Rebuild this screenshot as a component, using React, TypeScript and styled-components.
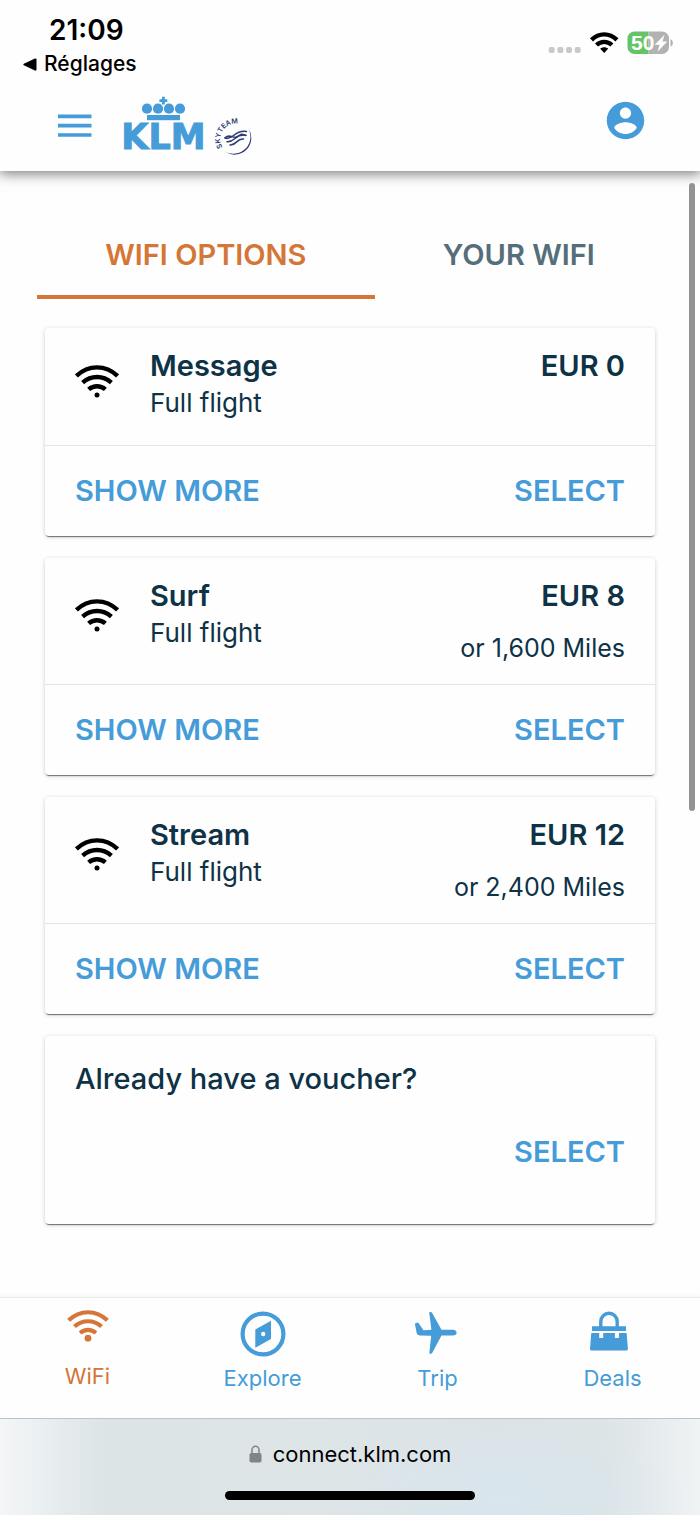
import React from "react";
import styled, { createGlobalStyle } from "styled-components";

const color = {
  blue: "#459cd8",
  orange: "#d47637",
  navy: "#0e3246",
  slate: "#546e7a",
  page: "#fefefe",
};

const GlobalStyle = createGlobalStyle`
  *, *::before, *::after { box-sizing: border-box; }
  body {
    margin: 0;
    background: ${color.page};
    color: ${color.navy};
    font-family: Inter, "Liberation Sans", sans-serif;
  }
  button {
    border: 0;
    padding: 0;
    background: none;
    color: inherit;
    font: inherit;
    cursor: pointer;
  }
  a { color: inherit; text-decoration: none; }
  svg { display: block; }
  h2, p { margin: 0; }
`;

const Page = styled.div`
  position: relative;
  display: flex;
  flex-direction: column;
  min-height: 100vh;
`;

const TopBar = styled.div`
  background: ${color.page};
  box-shadow: 0 2px 12px 1px rgba(0, 0, 0, 0.5);
`;

const StatusBar = styled.div`
  display: flex;
  justify-content: space-between;
  height: 86px;
  padding: 13px 27px 0 23px;
  color: #000;
`;

const StatusLeft = styled.div`
  display: flex;
  flex-direction: column;
`;

const Clock = styled.time`
  padding-left: 26px;
  font-size: 28px;
  font-weight: 600;
  line-height: 34px;
`;

const BackLink = styled.a`
  display: flex;
  align-items: center;
  gap: 7px;
  font-size: 21px;
  font-weight: 500;
  line-height: 34px;
`;

const StatusRight = styled.div`
  display: flex;
  align-items: flex-end;
  height: 42px;
`;

const Header = styled.header`
  display: flex;
  align-items: center;
  height: 85px;
  padding: 0 52px 5px 57px;
  color: ${color.blue};
`;

const MenuButton = styled.button`
  margin-right: 24px;
`;

const AccountButton = styled.button`
  margin: 0 0 12px auto;
`;

const Main = styled.main`
  flex: 1;
  padding: 40px 37px 72px;
`;

const Tabs = styled.div`
  display: flex;
`;

const Tab = styled.button<{ $active?: boolean }>`
  flex: 1 1 auto;
  padding: 24px 0 20px;
  border-bottom: 4px solid ${(p) => (p.$active ? color.orange : "transparent")};
  color: ${(p) => (p.$active ? color.orange : color.slate)};
  font-size: 29px;
  font-weight: 600;
  line-height: 40px;
`;

const CardList = styled.div`
  display: flex;
  flex-direction: column;
  gap: 22px;
  padding: 29px 8px 0;
`;

const Card = styled.section`
  border-radius: 4px;
  background: ${color.page};
  box-shadow: 0 2px 1px -1px rgba(0, 0, 0, 0.5), 0 1px 4px rgba(0, 0, 0, 0.2);
`;

const CardHead = styled.div`
  display: flex;
  min-height: 118px;
  padding: 20px 30px 20px;
  border-bottom: 1px solid #e4e5e6;
`;

const PlanIcon = styled.div`
  display: flex;
  align-items: center;
  width: 75px;
  padding-bottom: 10px;
  color: #000;
`;

const PlanText = styled.div`
  flex: 1;
`;

const PriceText = styled.div`
  text-align: right;
`;

const Title = styled.h2`
  font-size: 29px;
  font-weight: 600;
  line-height: 36px;
`;

const Detail = styled.p`
  font-size: 26px;
  line-height: 38px;
`;

const Miles = styled.p`
  margin-top: 18px;
  font-size: 25px;
  line-height: 32px;
`;

const CardActions = styled.div`
  display: flex;
  justify-content: space-between;
  height: 90px;
  padding: 0 30px;
`;

const TextButton = styled.button`
  color: ${color.blue};
  font-size: 29px;
  font-weight: 600;
  line-height: 36px;
`;

const VoucherCard = styled(Card)`
  display: flex;
  flex-direction: column;
  align-items: flex-start;
  gap: 37px;
  min-height: 188px;
  padding: 25px 30px;
`;

const VoucherTitle = styled.h2`
  font-size: 29px;
  font-weight: 500;
  line-height: 36px;
`;

const VoucherButton = styled(TextButton)`
  align-self: flex-end;
`;

const BottomNav = styled.nav`
  display: grid;
  grid-template-columns: repeat(4, 1fr);
  height: 121px;
  border-top: 1px solid #ececec;
  background: ${color.page};
  box-shadow: 0 -1px 4px rgba(0, 0, 0, 0.05);
`;

const NavItem = styled.a<{ $active?: boolean }>`
  display: flex;
  flex-direction: column;
  align-items: center;
  gap: ${(p) => (p.$active ? 18 : 5)}px;
  padding-top: ${(p) => (p.$active ? 12 : 13)}px;
  color: ${(p) => (p.$active ? color.orange : color.blue)};
  font-size: 22px;
  line-height: 32px;
`;

const BrowserBar = styled.footer`
  display: flex;
  flex-direction: column;
  align-items: center;
  gap: 19px;
  height: 97px;
  padding-top: 17px;
  border-top: 1px solid #bcc4ca;
  background:
    radial-gradient(ellipse 180px 80px at 72% 85%, rgba(216, 230, 238, 0.9), transparent),
    linear-gradient(90deg, #f4f6f7, #eaeff1 6%, #dce4e6 15%, #dee5e7 45%, #dbe3e7 70%, #dce4e6 86%, #e8edef 95%, #f0f3f4);
`;

const Address = styled.div`
  display: flex;
  align-items: center;
  gap: 11px;
  color: #000;
  font-size: 22px;
  line-height: 36px;
`;

const HomeIndicator = styled.div`
  width: 250px;
  height: 9px;
  border-radius: 5px;
  background: #000;
`;

const ScrollThumb = styled.div`
  position: absolute;
  top: 183px;
  right: 5px;
  width: 6px;
  height: 628px;
  border-radius: 3px;
  background: #929292;
`;

const WifiArcs = ({ width, height, dot }: { width: number; height: number; dot: number }) => (
  <svg width={width} height={height} viewBox="0 0 44 34" aria-hidden="true">
    <g fill="none" stroke="currentColor" strokeWidth="4.400">
      <path d="M1.400 11C13.300-.5 30.700-.5 42.600 11" />
      <path d="M7.600 17.600c8.400-7.500 20.400-7.500 28.800 0" />
      <path d="M13.600 24.400c5-4.300 11.800-4.300 16.800 0" />
    </g>
    <circle cx="22" cy="30" r={dot} fill="currentColor" />
  </svg>
);

const StatusIcons = () => (
  <svg width="125" height="24" viewBox="548 31 125 24" aria-label="Wi-Fi connected, battery 50 percent" role="img">
    <g fill="#c9c9c9">
      <rect x="548.700" y="47" width="6" height="6" rx="2" />
      <rect x="557.400" y="47" width="6" height="6" rx="2" />
      <rect x="566" y="47" width="6" height="6" rx="2" />
      <rect x="574.700" y="47" width="6" height="6" rx="2" />
    </g>
    <g fill="none" stroke="#000" strokeWidth="4.400">
      <path d="M591.500 39.800c7.400-7.200 18-7.200 25.400 0" />
      <path d="M596.500 45c4.600-4.200 10.800-4.200 15.400 0" />
    </g>
    <path d="M600.200 48.700c2.300-2 5.700-2 8 0l-4 4.300z" fill="#000" />
    <path d="M634.500 31.500H648.500V54H634.500a7 7 0 0 1-7-7v-8.500a7 7 0 0 1 7-7z" fill="#65c466" />
    <path d="M648.500 31.500H662a7 7 0 0 1 7 7V47a7 7 0 0 1-7 7H648.500z" fill="#b2b2b2" />
    <path d="M670.500 39.300c3.200 1.200 3.200 6 0 7.200z" fill="#b2b2b2" />
    <text x="631" y="50" fill="#fff" fontFamily="Liberation Sans, sans-serif" fontSize="21" fontWeight="700">
      50
    </text>
    <path d="M664.500 34.800l-9.800 10h4.800l-2 7 9.800-10.300h-4.800z" fill="#fff" />
  </svg>
);

const MenuIcon = () => (
  <svg width="35" height="24" viewBox="0 0 35 24" aria-hidden="true">
    <path d="M1 2.300h33.500M1 11.600h33.500M1 21h33.500" stroke="currentColor" strokeWidth="3.700" />
  </svg>
);

const Logo = () => (
  <svg width="138" height="64" viewBox="116 94 138 64" role="img" aria-label="KLM SkyTeam">
    <g fill="currentColor">
      <path d="M162 96.700h2.800v2.500h2.500v2.700h-2.500v2.600H162v-2.600h-2.600v-2.700h2.600z" />
      <circle cx="147" cy="108.700" r="5.100" />
      <circle cx="158" cy="108.700" r="5.100" />
      <circle cx="169" cy="108.700" r="5.100" />
      <circle cx="180" cy="108.700" r="5.100" />
      <rect x="147" y="115" width="33" height="5.200" />
      <text
        x="163.500"
        y="148.500"
        textAnchor="middle"
        fontFamily="DejaVu Sans, sans-serif"
        fontWeight="700"
        fontSize="35"
        stroke="currentColor"
        strokeWidth="1"
      >
        KLM
      </text>
    </g>
    <defs>
      <path id="skyteam-arc" d="M222.500 147.300A14 14 0 0 1 249 131" />
    </defs>
    <text fill="#2c3a72" fontSize="7" fontWeight="600">
      <textPath href="#skyteam-arc">SKYTEAM</textPath>
    </text>
    <path d="M248.300 128.500A16.600 16.600 0 0 1 225 151.500A17 17 0 0 0 248.300 128.500z" fill="#2c3a72" />
    <g fill="none" stroke="#2c3a72" strokeWidth="1.500" strokeLinecap="round">
      <path d="M225 137.800C230 133 233 139.500 237.500 136.500S242 134 245.500 135.500" />
      <path d="M225 138C233 141 234 129.500 246.500 131.500" />
      <path d="M227 141.800C235 142.500 235 133.500 246 135.300" />
      <path d="M230 145C237 145.500 236.500 138 243.500 139" />
    </g>
  </svg>
);

const AccountIcon = () => (
  <svg width="45" height="45" viewBox="0 0 24 24" aria-hidden="true">
    <path
      fill="currentColor"
      d="M12 2C6.480 2 2 6.480 2 12s4.480 10 10 10 10-4.480 10-10S17.520 2 12 2zm0 3c1.660 0 3 1.340 3 3s-1.340 3-3 3-3-1.340-3-3 1.340-3 3-3zm0 14.200c-2.500 0-4.710-1.280-6-3.220.03-1.990 4-3.080 6-3.080 1.990 0 5.970 1.090 6 3.080-1.290 1.940-3.500 3.220-6 3.220z"
    />
  </svg>
);

const CompassIcon = () => (
  <svg width="46" height="46" viewBox="0 0 46 46" aria-hidden="true">
    <circle cx="23" cy="23" r="20.400" fill="none" stroke="currentColor" strokeWidth="4.200" />
    <path
      fill="currentColor"
      fillRule="evenodd"
      d="M31 9.700v18.300L15.300 36.700V18.500zM23.200 20.800a2.200 2.200 0 1 0 0 4.400 2.200 2.200 0 0 0 0-4.400z"
    />
  </svg>
);

const PlaneIcon = () => (
  <svg width="46" height="46" viewBox="3 0 46 46" aria-hidden="true">
    <path
      fill="currentColor"
      d="M17.200 1.300c1.500-.6 2.500-.2 3 .8l9.300 16.700H41c2.300.3 3.600 1.300 3.600 3s-1.300 2.600-3.600 2.800H29.500L20.300 41.800c-.6 1-1.700 1.200-3 .7l1.900-17.800-11.400-.3c-1.800-.2-2.700-.8-3.100-2.300L2.900 12.900c.9-1.200 2.300-1.400 3.600-.8l5 7.100 7.900-.5z"
    />
  </svg>
);

const BagIcon = () => (
  <svg width="46" height="46" viewBox="4 0 46 46" aria-hidden="true">
    <path d="M14.800 16V10.500a8.200 8.200 0 0 1 16.400 0V16" fill="none" stroke="currentColor" strokeWidth="3.400" />
    <path d="M6 15.300h34v4.800H6z" fill="currentColor" />
    <path
      fill="currentColor"
      d="M5.300 22h7.900v5h4v-5h11.700v5h4v-5h7.700l1.300 15.700c0 1.200-.6 1.800-1.800 1.800H5.800c-1.200 0-1.800-.6-1.800-1.800z"
    />
  </svg>
);

const LockIcon = () => (
  <svg width="13" height="18" viewBox="0 0 13 18" aria-hidden="true">
    <path d="M3 8.500V5a3.500 3.800 0 0 1 7 0V8.500" fill="none" stroke="#808489" strokeWidth="1.500" />
    <rect x=".5" y="8" width="12" height="9.500" rx="1.800" fill="#808489" />
  </svg>
);

const plans = [
  { name: "Message", detail: "Full flight", price: "EUR 0", miles: "" },
  { name: "Surf", detail: "Full flight", price: "EUR 8", miles: "or 1,600 Miles" },
  { name: "Stream", detail: "Full flight", price: "EUR 12", miles: "or 2,400 Miles" },
];

export default function App() {
  return (
    <>
      <GlobalStyle />
      <Page>
        <TopBar>
          <StatusBar>
            <StatusLeft>
              <Clock>21:09</Clock>
              <BackLink href="#settings">
                <svg width="14" height="13" viewBox="0 0 14 13" aria-hidden="true">
                  <path d="M.8 5.700L12 .5q1.500-.5 1.500 1v10q0 1.500-1.500 1L.8 7.300q-1-.8 0-1.600z" />
                </svg>
                Réglages
              </BackLink>
            </StatusLeft>
            <StatusRight>
              <StatusIcons />
            </StatusRight>
          </StatusBar>
          <Header>
            <MenuButton aria-label="Menu">
              <MenuIcon />
            </MenuButton>
            <a href="#home" aria-label="KLM home">
              <Logo />
            </a>
            <AccountButton aria-label="Account">
              <AccountIcon />
            </AccountButton>
          </Header>
        </TopBar>

        <Main>
          <Tabs role="tablist">
            <Tab role="tab" aria-selected="true" $active>
              WIFI OPTIONS
            </Tab>
            <Tab role="tab" aria-selected="false">
              YOUR WIFI
            </Tab>
          </Tabs>
          <CardList>
            {plans.map((plan) => (
              <Card key={plan.name}>
                <CardHead>
                  <PlanIcon>
                    <WifiArcs width={44} height={34} dot={2.5} />
                  </PlanIcon>
                  <PlanText>
                    <Title>{plan.name}</Title>
                    <Detail>{plan.detail}</Detail>
                  </PlanText>
                  <PriceText>
                    <Title as="p">{plan.price}</Title>
                    {plan.miles && <Miles>{plan.miles}</Miles>}
                  </PriceText>
                </CardHead>
                <CardActions>
                  <TextButton>SHOW MORE</TextButton>
                  <TextButton>SELECT</TextButton>
                </CardActions>
              </Card>
            ))}
            <VoucherCard>
              <VoucherTitle>Already have a voucher?</VoucherTitle>
              <VoucherButton>SELECT</VoucherButton>
            </VoucherCard>
          </CardList>
        </Main>

        <BottomNav>
          <NavItem href="#wifi" $active>
            <WifiArcs width={42} height={32} dot={3.6} />
            WiFi
          </NavItem>
          <NavItem href="#explore">
            <CompassIcon />
            Explore
          </NavItem>
          <NavItem href="#trip">
            <PlaneIcon />
            Trip
          </NavItem>
          <NavItem href="#deals">
            <BagIcon />
            Deals
          </NavItem>
        </BottomNav>

        <BrowserBar>
          <Address>
            <LockIcon />
            connect.klm.com
          </Address>
          <HomeIndicator />
        </BrowserBar>
        <ScrollThumb />
      </Page>
    </>
  );
}
